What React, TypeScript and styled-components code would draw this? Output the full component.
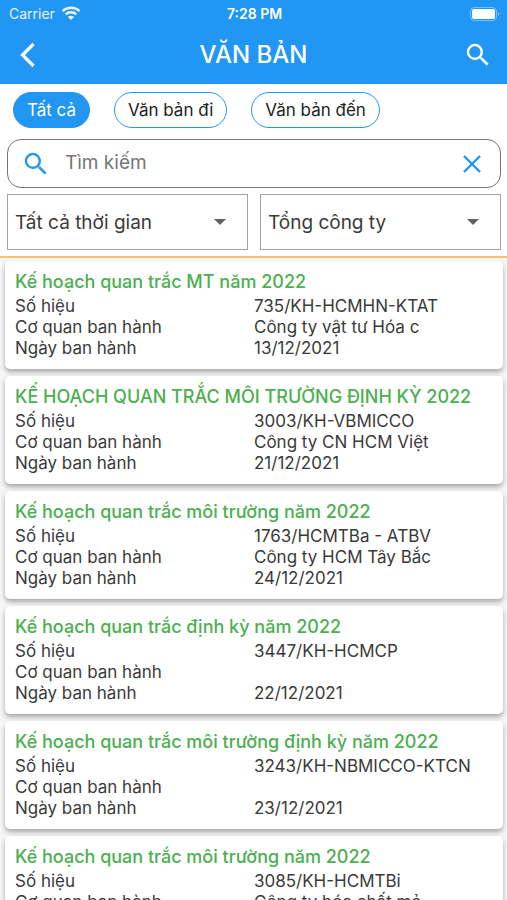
import { ChangeEvent, FC, useState } from "react";
import styled, { createGlobalStyle } from "styled-components";

const PALETTE = {
    WHITE: "#ffffff",
    BLUE: "#2196f3",
    GREEN: "#4caf50",
    ORANGE: "#fbc26a",
    TEXT: "#3a3a3a",
    BLACK: "#212121",
    GREY_100: "#f6f6f6",
    GREY_400: "#a3a3a3",
    GREY_600: "#757575",
};

const GlobalStyle = createGlobalStyle`
    * {
        box-sizing: border-box;
    }

    body {
        margin: 0;
        background: ${PALETTE.WHITE};
        font-family: Inter, "Liberation Sans", sans-serif;
        color: ${PALETTE.TEXT};
    }

    button,
    input,
    select {
        font: inherit;
        color: inherit;
    }
`;

const Page = styled.div`
    height: 100vh;
    display: flex;
    flex-direction: column;
`;

const Header = styled.header`
    background: ${PALETTE.BLUE};
    color: ${PALETTE.WHITE};
`;

const StatusBar = styled.div`
    display: grid;
    grid-template-columns: 1fr auto 1fr;
    align-items: center;
    height: 27px;
    padding: 0 7px 0 9px;
    font-size: 14px;
    line-height: 20px;
`;

const Carrier = styled.span`
    display: flex;
    align-items: center;
    gap: 6px;
    opacity: 0.9;
`;

const Clock = styled.span`
    font-weight: 600;
`;

const BatterySlot = styled.span`
    display: flex;
    justify-content: flex-end;
`;

const AppBar = styled.div`
    display: grid;
    grid-template-columns: 1fr auto 1fr;
    align-items: center;
    height: 57px;
    padding: 0 14px 2px;
`;

const Title = styled.h1`
    margin: 0;
    font-size: 24px;
    line-height: 32px;
    font-weight: 500;
`;

const IconButton = styled.button<{ $end?: boolean }>`
    display: flex;
    justify-self: ${({ $end }) => ($end ? "end" : "start")};
    padding: 0;
    border: 0;
    background: none;
    cursor: pointer;
`;

const Filters = styled.div`
    display: flex;
    flex-direction: column;
    gap: 6px;
    padding: 8px 6px 6px 7px;
    border-bottom: 2px solid ${PALETTE.ORANGE};
`;

const Tabs = styled.div`
    display: flex;
    gap: 24px;
    padding: 0 6px 5px;
`;

const Tab = styled.button<{ $active: boolean }>`
    height: 36px;
    padding: 0 13px;
    border: 1px solid ${PALETTE.BLUE};
    border-radius: 18px;
    background: ${({ $active }) => ($active ? PALETTE.BLUE : PALETTE.WHITE)};
    color: ${({ $active }) => ($active ? PALETTE.WHITE : PALETTE.BLACK)};
    font-size: 17px;
    line-height: 24px;
    white-space: nowrap;
    cursor: pointer;
`;

const SearchBox = styled.label`
    display: flex;
    align-items: center;
    gap: 14px;
    height: 49px;
    padding: 0 13px;
    border: 1px solid ${PALETTE.GREY_600};
    border-radius: 14px;
`;

const SearchInput = styled.input`
    flex: 1;
    min-width: 0;
    padding: 0 0 2px;
    border: 0;
    outline: none;
    background: none;
    font-size: 19px;
    line-height: 24px;

    &::placeholder {
        color: ${PALETTE.GREY_600};
        opacity: 1;
    }
`;

const SelectRow = styled.div`
    display: grid;
    grid-template-columns: 1fr 1fr;
    gap: 12px;
`;

const SelectBox = styled.div`
    display: grid;
    align-items: center;
    height: 56px;
    border: 1px solid ${PALETTE.GREY_400};

    > * {
        grid-area: 1 / 1;
    }

    > svg {
        justify-self: end;
        margin-right: 21px;
        pointer-events: none;
    }
`;

const Select = styled.select`
    appearance: none;
    width: 100%;
    height: 100%;
    padding: 0 40px 0 7px;
    border: 0;
    background: none;
    font-size: 19px;
`;

const List = styled.main`
    flex: 1;
    min-height: 0;
    display: flex;
    flex-direction: column;
    gap: 7px;
    padding: 3px 4px 8px 5px;
    overflow-y: auto;
    scrollbar-width: none;
    background: ${PALETTE.GREY_100};
`;

const Card = styled.article`
    flex-shrink: 0;
    padding: 7px 10px 10px;
    border-radius: 5px;
    background: ${PALETTE.WHITE};
    box-shadow: 0 3px 5px rgba(0, 0, 0, 0.32);
`;

const CardTitle = styled.h2`
    margin: 0 0 1px;
    color: ${PALETTE.GREEN};
    font-size: 18px;
    line-height: 27px;
    font-weight: 500;
    white-space: nowrap;
`;

const Details = styled.dl`
    display: grid;
    grid-template-columns: 1fr 1fr;
    grid-auto-rows: 21px;
    margin: 0;
    font-size: 17px;
    line-height: 21px;
`;

const Value = styled.dd`
    margin: 0;
`;

const WifiIcon: FC = () => (
    <svg width="20" height="15" viewBox="0 0 20 15" fill="none" stroke="currentColor">
        <path d="M1.5 5.2C6.2.7 13.8.7 18.5 5.2" strokeWidth="2.4" />
        <path d="M4.7 8.4C7.6 5.6 12.4 5.6 15.3 8.4" strokeWidth="2.4" />
        <path d="M10 14 6.9 10.9C8.6 9.3 11.4 9.3 13.1 10.9Z" fill="currentColor" stroke="none" />
    </svg>
);

const BatteryIcon: FC = () => (
    <svg width="30" height="14" viewBox="0 0 30 14" fill="none">
        <rect x="0.5" y="0.5" width="26" height="13" rx="4" stroke="currentColor" opacity="0.4" />
        <rect x="2" y="2" width="23" height="10" rx="2" fill="currentColor" />
        <path d="M28 5v4c1.6-.7 1.6-3.3 0-4Z" fill="currentColor" opacity="0.5" />
    </svg>
);

const BackIcon: FC = () => (
    <svg width="28" height="28" viewBox="0 0 28 28" fill="none" stroke="currentColor" strokeWidth="3.2">
        <path d="M19.5 3 8.5 14l11 11" />
    </svg>
);

const SearchIcon: FC<{ color: string }> = ({ color }) => (
    <svg width="30" height="30" viewBox="0 0 24 24" fill={color}>
        <path d="M15.5 14h-.79l-.28-.27A6.47 6.47 0 0 0 16 9.5 6.5 6.5 0 1 0 9.5 16c1.61 0 3.09-.59 4.23-1.57l.27.28v.79l5 4.99L20.49 19l-4.99-5zm-6 0C7.01 14 5 11.99 5 9.5S7.01 5 9.5 5 14 7.01 14 9.5 11.99 14 9.5 14z" />
    </svg>
);

const CloseIcon: FC = () => (
    <svg width="30" height="30" viewBox="0 0 30 30" stroke={PALETTE.BLUE} strokeWidth="2.4">
        <path d="m7 7 16 16M23 7 7 23" />
    </svg>
);

const CaretIcon: FC = () => (
    <svg width="12" height="6" viewBox="0 0 12 6" fill="#616161">
        <path d="M0 0h12L6 6z" />
    </svg>
);

type Doc = {
    title: string;
    code: string;
    issuer: string;
    date: string;
};

const TABS = ["Tất cả", "Văn bản đi", "Văn bản đến"];

const DOCS: Doc[] = [
    {
        title: "Kế hoạch quan trắc MT năm 2022",
        code: "735/KH-HCMHN-KTAT",
        issuer: "Công ty vật tư Hóa c",
        date: "13/12/2021",
    },
    {
        title: "KẾ HOẠCH QUAN TRẮC MÔI TRƯỜNG ĐỊNH KỲ 2022",
        code: "3003/KH-VBMICCO",
        issuer: "Công ty CN HCM Việt",
        date: "21/12/2021",
    },
    {
        title: "Kế hoạch quan trắc môi trường năm 2022",
        code: "1763/HCMTBa - ATBV",
        issuer: "Công ty HCM Tây Bắc",
        date: "24/12/2021",
    },
    {
        title: "Kế hoạch quan trắc định kỳ năm 2022",
        code: "3447/KH-HCMCP",
        issuer: "",
        date: "22/12/2021",
    },
    {
        title: "Kế hoạch quan trắc môi trường định kỳ năm 2022",
        code: "3243/KH-NBMICCO-KTCN",
        issuer: "",
        date: "23/12/2021",
    },
    {
        title: "Kế hoạch quan trắc môi trường năm 2022",
        code: "3085/KH-HCMTBi",
        issuer: "Công ty hóa chất mỏ",
        date: "",
    },
];

const DocCard: FC<{ doc: Doc }> = ({ doc }) => (
    <Card>
        <CardTitle>{doc.title}</CardTitle>
        <Details>
            <dt>Số hiệu</dt>
            <Value>{doc.code}</Value>
            <dt>Cơ quan ban hành</dt>
            <Value>{doc.issuer}</Value>
            <dt>Ngày ban hành</dt>
            <Value>{doc.date}</Value>
        </Details>
    </Card>
);

const App: FC = () => {
    const [activeTab, setActiveTab] = useState(TABS[0]);
    const [query, setQuery] = useState("");

    const handleQueryChange = (e: ChangeEvent<HTMLInputElement>) => {
        setQuery(e.target.value);
    };

    return (
        <Page>
            <GlobalStyle />

            <Header>
                <StatusBar>
                    <Carrier>
                        Carrier
                        <WifiIcon />
                    </Carrier>
                    <Clock>7:28 PM</Clock>
                    <BatterySlot>
                        <BatteryIcon />
                    </BatterySlot>
                </StatusBar>
                <AppBar>
                    <IconButton aria-label="Quay lại">
                        <BackIcon />
                    </IconButton>
                    <Title>VĂN BẢN</Title>
                    <IconButton $end aria-label="Tìm kiếm">
                        <SearchIcon color={PALETTE.WHITE} />
                    </IconButton>
                </AppBar>
            </Header>

            <Filters>
                <Tabs>
                    {TABS.map((tab) => (
                        <Tab key={tab} $active={tab === activeTab} onClick={() => setActiveTab(tab)}>
                            {tab}
                        </Tab>
                    ))}
                </Tabs>

                <SearchBox>
                    <SearchIcon color={PALETTE.BLUE} />
                    <SearchInput
                        value={query}
                        onChange={handleQueryChange}
                        placeholder="Tìm kiếm"
                        aria-label="Tìm kiếm"
                    />
                    <IconButton aria-label="Xóa" onClick={() => setQuery("")}>
                        <CloseIcon />
                    </IconButton>
                </SearchBox>

                <SelectRow>
                    <SelectBox>
                        <Select aria-label="Thời gian">
                            <option>Tất cả thời gian</option>
                        </Select>
                        <CaretIcon />
                    </SelectBox>
                    <SelectBox>
                        <Select aria-label="Đơn vị">
                            <option>Tổng công ty</option>
                        </Select>
                        <CaretIcon />
                    </SelectBox>
                </SelectRow>
            </Filters>

            <List>
                {DOCS.map((doc) => (
                    <DocCard key={doc.code} doc={doc} />
                ))}
            </List>
        </Page>
    );
};

export default App;
